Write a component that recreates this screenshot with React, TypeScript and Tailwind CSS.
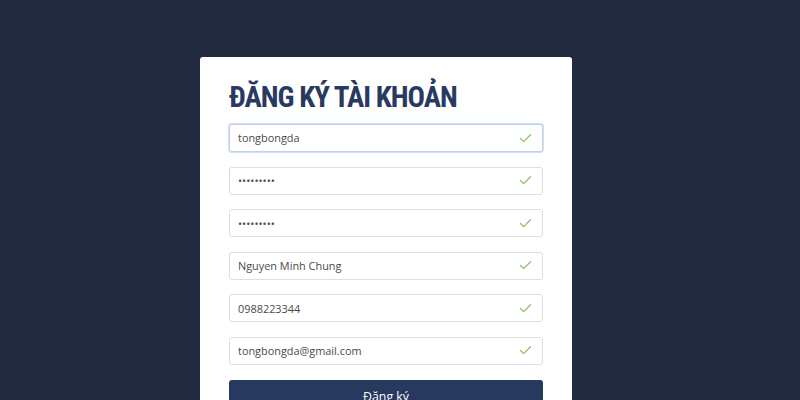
import { Check } from 'lucide-react';

const fields = [
  { value: 'tongbongda', type: 'text', focused: true },
  { value: '123456789', type: 'password' },
  { value: '123456789', type: 'password' },
  { value: 'Nguyen Minh Chung', type: 'text' },
  { value: '0988223344', type: 'text' },
  { value: 'tongbongda@gmail.com', type: 'text' },
];

export default function App() {
  return (
    <div className="flex h-[400px] w-full justify-center overflow-hidden bg-[#222a40] pt-[57px]">
      <div className="ml-[-28px] flex h-[420px] w-[372px] flex-col rounded-t-[3px] bg-white px-[29px] pt-[21px]">
        <h1 className="mb-[8px] font-['Liberation_Sans_Narrow','Roboto_Condensed','DejaVu_Sans_Condensed',sans-serif] text-[29px] font-bold leading-[38px] tracking-[-1px] text-[#293a62]">
          ĐĂNG KÝ TÀI KHOẢN
        </h1>
        <div className="flex flex-col gap-[14.6px]">
          {fields.map((f, i) => (
            <div
              key={i}
              className={`flex h-[28px] items-center rounded-[3px] border bg-white pl-[8px] pr-[9px] ${
                f.focused ? 'border-[#c3d2ea] shadow-[0_0_0_1px_#d3def0]' : 'border-[#dedede]'
              }`}
            >
              <input
                type={f.type}
                defaultValue={f.value}
                readOnly
                className="min-w-0 flex-1 bg-transparent pt-[1px] font-['Open_Sans',sans-serif] text-[10.9px] text-[#4a4a4a] outline-none"
              />
              <Check size={15} strokeWidth={2.2} className="text-[#8cc36b]" aria-hidden />
            </div>
          ))}
          <button
            type="button"
            className="h-[32px] rounded-[3px] bg-[#27395f] pt-[4px] font-['Open_Sans',sans-serif] text-[12.3px] text-white"
          >
            Đăng ký
          </button>
        </div>
      </div>
    </div>
  );
}
